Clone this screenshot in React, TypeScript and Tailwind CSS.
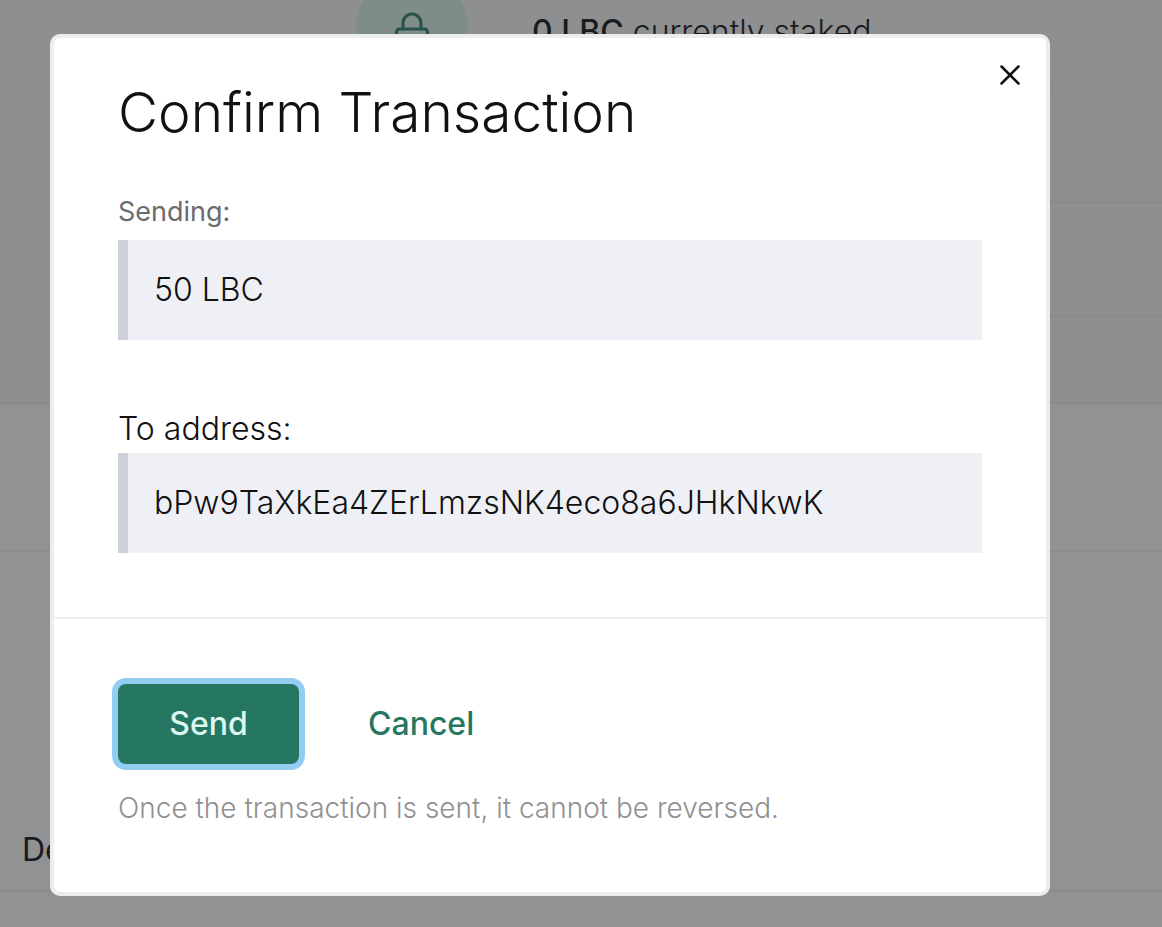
import React from "react";
import { X } from "lucide-react";

function Field({ children }: { children: React.ReactNode }) {
  return (
    <dd className="flex h-[100px] items-center border-l-10 border-[#cdd2da] bg-[#eff0f5] pl-[26px] text-[32px] font-[350] leading-10">
      {children}
    </dd>
  );
}

function Wallet() {
  return (
    <main aria-hidden="true" className="min-h-screen overflow-hidden bg-white">
      <section className="flex h-[404px] border-b-2 border-[#eeeeee] bg-[#f9f9fa]">
        <div className="flex w-[468px] justify-end">
          <div className="-mt-7 flex size-28 items-center justify-center rounded-full bg-[#dcf4ec]">
            <svg
              viewBox="0 0 36 40"
              className="h-10 w-9"
              fill="none"
              stroke="#2c8168"
              strokeWidth="3.2"
              strokeLinecap="round"
              strokeLinejoin="round"
            >
              <rect x="2.5" y="21" width="31" height="19" rx="3" />
              <path d="M9 21V15a9 9 0 0 1 18 0v6" />
            </svg>
          </div>
        </div>
        <div className="flex-1 pl-16">
          <p className="flex h-[89px] border-b-2 border-[#eeeeee] pt-3 text-[32px] font-light leading-10">
            <span>
              <b className="font-medium">0 LBC</b> currently staked
            </span>
          </p>
          <div className="h-[114px] border-b-2 border-[#eeeeee]" />
          <div className="h-[114px] border-b-2 border-[#eeeeee]" />
        </div>
      </section>
      <section className="h-[148px] border-b-2 border-[#eeeeee]" />
      <section className="flex h-[340px] items-end border-b-2 border-[#eeeeee] px-[22px] pb-5 text-[32px] leading-10">
        Details
      </section>
    </main>
  );
}

export default function App() {
  return (
    <div className="relative font-[Inter,sans-serif] text-[#111111]">
      <Wallet />
      <div className="absolute inset-0 flex items-start bg-[#222527]/50 pl-[50px] pr-28 pt-[34px]">
        <div
          role="dialog"
          aria-modal="true"
          aria-labelledby="title"
          className="relative w-full rounded-[10px] border-4 border-[#ededed] bg-white"
        >
          <button
            type="button"
            aria-label="Close"
            className="absolute right-4 top-[17px] flex size-10 items-center justify-center"
          >
            <X size={34} strokeWidth={1.8} />
          </button>
          <div className="px-16 pb-16 pt-10">
            <h1 id="title" className="text-[55px] font-light leading-[68px]">
              Confirm Transaction
            </h1>
            <dl className="pt-[46px]">
              <dt className="pb-2 text-[27px] leading-10 text-[#6b6b6e]">Sending:</dt>
              <Field>50 LBC</Field>
              <dt className="pt-[69px] pb-1 text-[32px] font-[350] leading-10">To address:</dt>
              <Field>bPw9TaXkEa4ZErLmzsNK4eco8a6JHkNkwK</Field>
            </dl>
          </div>
          <div className="border-t-2 border-[#eeeeee] px-16 pb-[64px] pt-[65px]">
            <div className="flex h-20 gap-[69px]">
              <button
                type="button"
                className="w-[181px] rounded-[8px] bg-[#257761] text-[32px] font-medium text-[#dcf8f0] ring-6 ring-[#93cdf2]"
              >
                Send
              </button>
              <button type="button" className="text-[32px] font-medium text-[#257761]">
                Cancel
              </button>
            </div>
            <p className="pt-6 text-[28px] font-[350] leading-10 text-[#919191]">
              Once the transaction is sent, it cannot be reversed.
            </p>
          </div>
        </div>
      </div>
    </div>
  );
}
